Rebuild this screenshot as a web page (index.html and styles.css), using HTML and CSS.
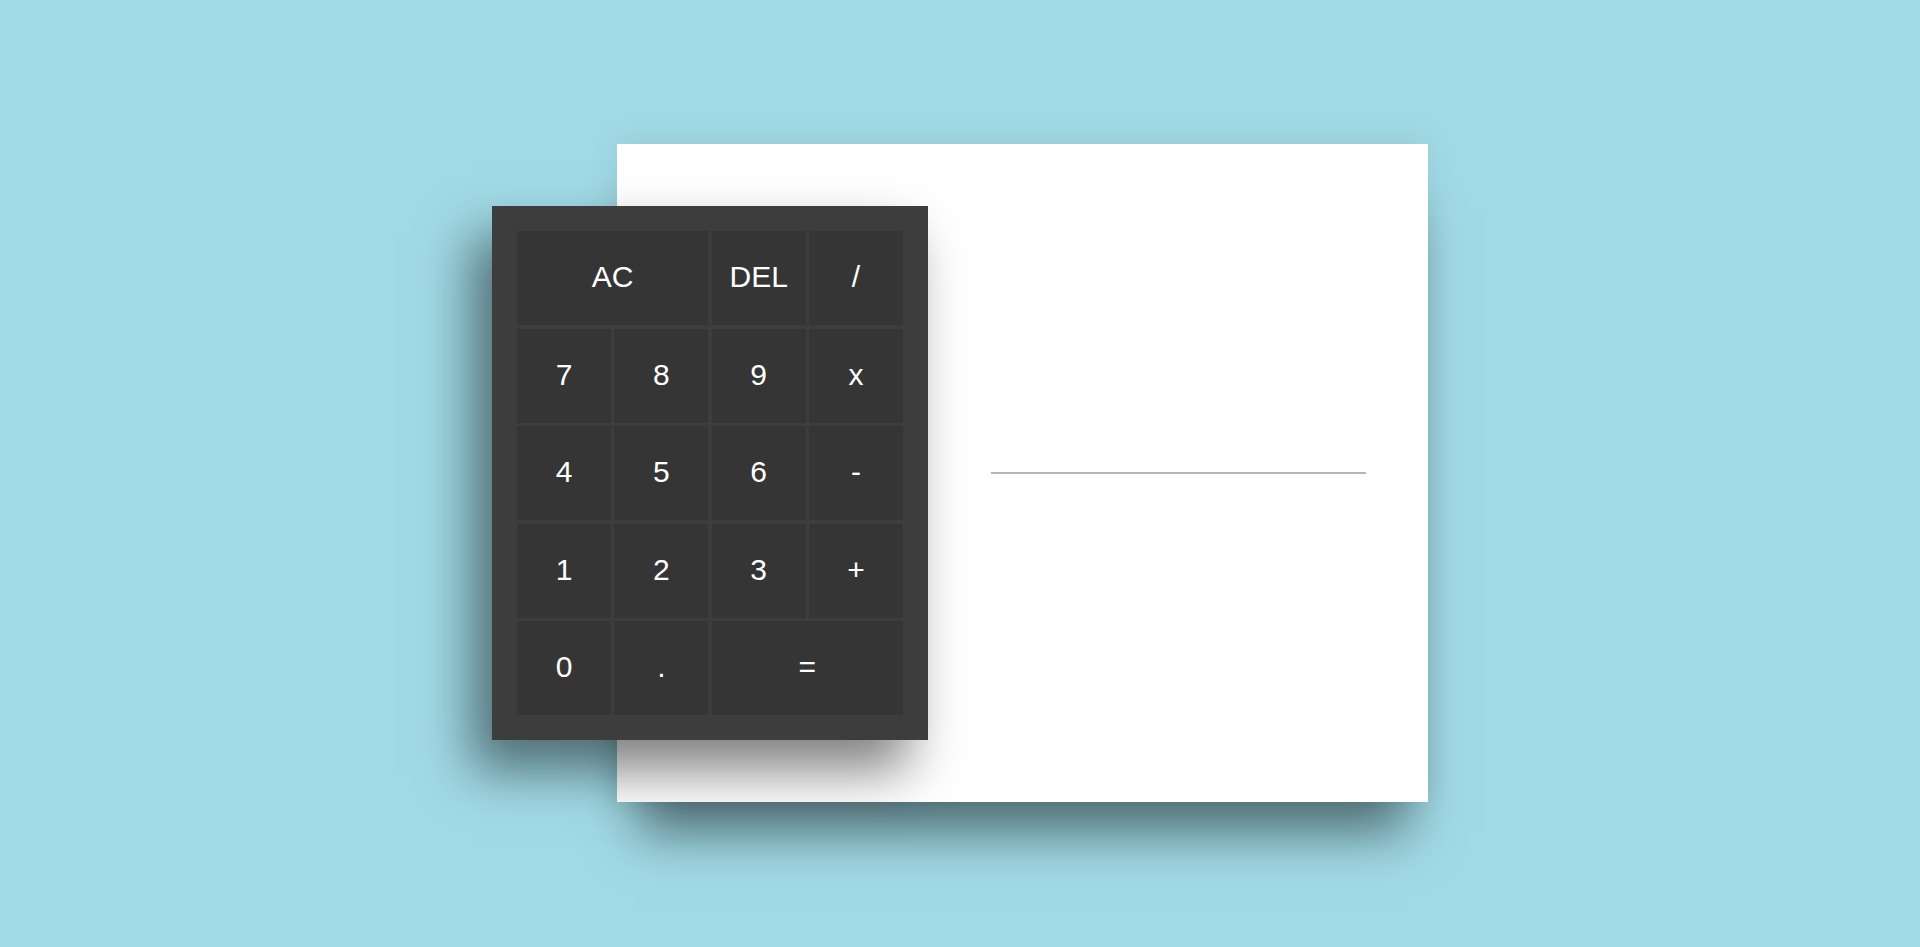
FILE: index.html
```html
<!DOCTYPE html>
<html lang="en">
<head>
<meta charset="utf-8">
<title>Calculator</title>
<link rel="stylesheet" href="styles.css">
</head>
<body>
<main class="stage">
  <div class="calculator">
    <div class="keys">
      <button class="key span-2">AC</button>
      <button class="key">DEL</button>
      <button class="key">/</button>
      <button class="key">7</button>
      <button class="key">8</button>
      <button class="key">9</button>
      <button class="key">x</button>
      <button class="key">4</button>
      <button class="key">5</button>
      <button class="key">6</button>
      <button class="key">-</button>
      <button class="key">1</button>
      <button class="key">2</button>
      <button class="key">3</button>
      <button class="key">+</button>
      <button class="key">0</button>
      <button class="key">.</button>
      <button class="key span-2">=</button>
    </div>
  </div>
  <section class="screen">
    <div class="output"></div>
  </section>
</main>
</body>
</html>
```
FILE: styles.css
```css
html, body {
  margin: 0;
  padding: 0;
}
body {
  background: #a1dae6;
  font-family: "Liberation Sans", Arial, sans-serif;
  min-height: 100vh;
  display: flex;
  align-items: center;
  justify-content: center;
}
.stage {
  display: flex;
  align-items: center;
  margin-top: -1px;
}
.calculator {
  position: relative;
  z-index: 2;
  width: 436px;
  height: 534px;
  box-sizing: border-box;
  padding: 25px;
  background: #3d3d3d;
  margin-right: -311px;
  box-shadow: -20px 30px 50px rgba(0, 0, 0, 0.5);
}
.keys {
  display: grid;
  grid-template-columns: repeat(4, 94px);
  grid-auto-rows: 94px;
  column-gap: 3.33px;
  row-gap: 3.5px;
}
.key {
  border: none;
  margin: 0;
  padding: 0 0 2px 0;
  background: #353535;
  color: #ffffff;
  font-family: "Liberation Sans", Arial, sans-serif;
  font-size: 30px;
  display: flex;
  align-items: center;
  justify-content: center;
}
.span-2 {
  grid-column: span 2;
}
.screen {
  width: 811px;
  height: 658px;
  box-sizing: border-box;
  padding-left: 311px;
  background: #ffffff;
  display: flex;
  align-items: center;
  justify-content: center;
  box-shadow: 0 50px 50px -20px rgba(0, 0, 0, 0.5), 0 -5px 30px rgba(0, 0, 0, 0.07);
}
.output {
  width: 375px;
  height: 0;
  border-bottom: 2px solid #b4b4b4;
}
```
